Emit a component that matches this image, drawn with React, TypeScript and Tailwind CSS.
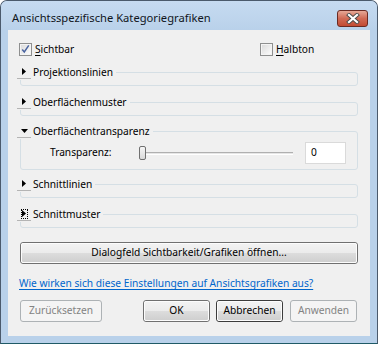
import React from "react";

function Check({ checked }: { checked?: boolean }) {
  return (
    <span className="w-[13px] h-[13px] border border-[#8e8f8f] bg-white flex items-center justify-center shrink-0">
      <span className="w-[11px] h-[11px] border border-[#f4f4f4] bg-gradient-to-br from-[#dcdcdc] to-[#fbfbfb] flex items-center justify-center">
        {checked && (
          <svg width="11" height="11" viewBox="0 0 11 11">
            <path d="M1.5 5.5 L4 8.5 L9.5 0.5" fill="none" stroke="#4a64a0" strokeWidth="1.8" />
          </svg>
        )}
      </span>
    </span>
  );
}

function Toggle({ open, focus }: { open?: boolean; focus?: boolean }) {
  return (
    <span className="w-[14px] h-[14px] border-b border-[#b4b4b4] flex items-center justify-center shrink-0 bg-[#f0f0f0]">
      <span className={focus ? "w-[7px] h-[10px] border border-dotted border-black flex items-center justify-center" : "w-[7px] h-[10px] flex items-center justify-center"}>
        {open ? (
          <svg width="7" height="4" viewBox="0 0 7 4">
            <path d="M0 0 L7 0 L3.5 4 Z" fill="#000" />
          </svg>
        ) : (
          <svg width="4" height="7" viewBox="0 0 4 7">
            <path d="M0 0 L4 3.5 L0 7 Z" fill="#000" />
          </svg>
        )}
      </span>
    </span>
  );
}

function Group({
  title,
  open,
  focus,
  mt,
  children,
}: {
  title: string;
  open?: boolean;
  focus?: boolean;
  mt: string;
  children?: React.ReactNode;
}) {
  return (
    <div className={`${mt} ml-[12px] w-[338px] border border-[#d5dfe5] rounded-[3px] ${open ? "h-[39px]" : "h-[14px]"}`}>
      <div className="-mt-[9px] -ml-[4px] flex items-center bg-[#f0f0f0] w-fit h-[16px] pr-[3px]">
        <Toggle open={open} focus={focus} />
        <span className="ml-[2px] leading-[16px]">{title}</span>
      </div>
      {children}
    </div>
  );
}

function Btn({
  children,
  disabled,
  focused,
  className,
}: {
  children: React.ReactNode;
  disabled?: boolean;
  focused?: boolean;
  className?: string;
}) {
  if (disabled) {
    return (
      <div className={`h-[22px] rounded-[3px] border border-[#adb2b5] bg-[#f4f4f4] text-[#838383] flex items-center justify-center ${className ?? ""}`}>
        {children}
      </div>
    );
  }
  return (
    <div
      className={`h-[22px] rounded-[3px] border ${focused ? "border-[#3c3c3c]" : "border-[#707070]"} flex ${className ?? ""}`}
    >
      <div className="flex-1 rounded-[2px] border border-[#fcfcfc] bg-[linear-gradient(to_bottom,#f2f2f2_0%,#ebebeb_50%,#dddddd_50%,#cfcfcf_100%)] flex items-center justify-center">
        {children}
      </div>
    </div>
  );
}

export default function App() {
  return (
    <div className="w-[378px] h-[344px] bg-white font-['Segoe_UI','Noto_Sans',sans-serif] text-[10.2px] text-black">
      <div className="w-full h-full rounded-t-[7px] border border-[#4b5a6c] border-b-[#1f5a66] bg-[#b9d1ea] flex flex-col overflow-hidden">
        <div className="h-[29px] shrink-0 flex items-start pl-[11px] pr-[9px] bg-gradient-to-b from-[#c6dbf1] to-[#b9d1ea]">
          <span className="flex-1 text-[11.2px] leading-[16px] mt-[9px] text-[#10151c]">Ansichtsspezifische Kategoriegrafiken</span>
          <div className="mt-[9px] w-[31px] h-[17px] rounded-[3px] border border-[#6a2a22] bg-gradient-to-b from-[#e5a897] via-[#d06a55] to-[#c24a32] flex items-center justify-center">
            <svg width="14" height="11" viewBox="0 0 14 11">
              <path d="M3 2 L11 9 M11 2 L3 9" stroke="#4a4a4a" strokeWidth="4" strokeLinecap="square" />
              <path d="M3 2 L11 9 M11 2 L3 9" stroke="#ffffff" strokeWidth="2.2" strokeLinecap="square" />
            </svg>
          </div>
        </div>
        <div className="mx-[7px] h-[306px] shrink-0 bg-[#f0f0f0] flex flex-col">
          <div className="mt-[13px] flex items-center h-[13px]">
            <div className="ml-[11px] w-[241px] flex items-center">
              <Check checked />
              <span className="ml-[3px] leading-[13px]">
                <span className="underline underline-offset-2">S</span>ichtbar
              </span>
            </div>
            <div className="flex items-center">
              <Check />
              <span className="ml-[3px] leading-[13px]">
                <span className="underline underline-offset-2">H</span>albton
              </span>
            </div>
          </div>

          <Group title="Projektionslinien" mt="mt-[16px]" />
          <Group title="Oberflächenmuster" mt="mt-[16px]" />
          <Group title="Oberflächentransparenz" open mt="mt-[15px]">
            <div className="mt-[3px] flex items-center h-[22px]">
              <span className="ml-[29px] w-[89px]">Transparenz:</span>
              <div className="relative w-[155px] h-[14px] flex items-center">
                <div className="ml-[4px] w-[150px] h-[3px] border-t border-[#b0b0b0] border-b border-b-[#ffffff] bg-[#e6e6e6]" />
                <div className="absolute left-0 top-0 w-[7px] h-[14px] rounded-[2px] border border-[#707070] bg-gradient-to-b from-[#f6f6f6] to-[#dadada]" />
              </div>
              <div className="ml-[11px] w-[41px] h-[22px] border border-[#dadada] bg-white flex items-center pl-[5px] text-[#000]">
                0
              </div>
            </div>
          </Group>
          <Group title="Schnittlinien" mt="mt-[14px]" />
          <Group title="Schnittmuster" focus mt="mt-[16px]" />

          <Btn className="mt-[14px] ml-[12px] w-[338px]">Dialogfeld Sichtbarkeit/Grafiken öffnen...</Btn>

          <div className="mt-[11px] ml-[11px] leading-[16px] text-[#0066cc] underline underline-offset-2">
            Wie wirken sich diese Einstellungen auf Ansichtsgrafiken aus?
          </div>

          <div className="mt-[9px] flex">
            <Btn disabled className="ml-[12px] w-[82px]">Zurücksetzen</Btn>
            <Btn className="ml-[41px] w-[67px]">OK</Btn>
            <Btn focused className="ml-[6px] w-[67px]">Abbrechen</Btn>
            <Btn disabled className="ml-[7px] w-[67px]">Anwenden</Btn>
          </div>
        </div>
      </div>
    </div>
  );
}
